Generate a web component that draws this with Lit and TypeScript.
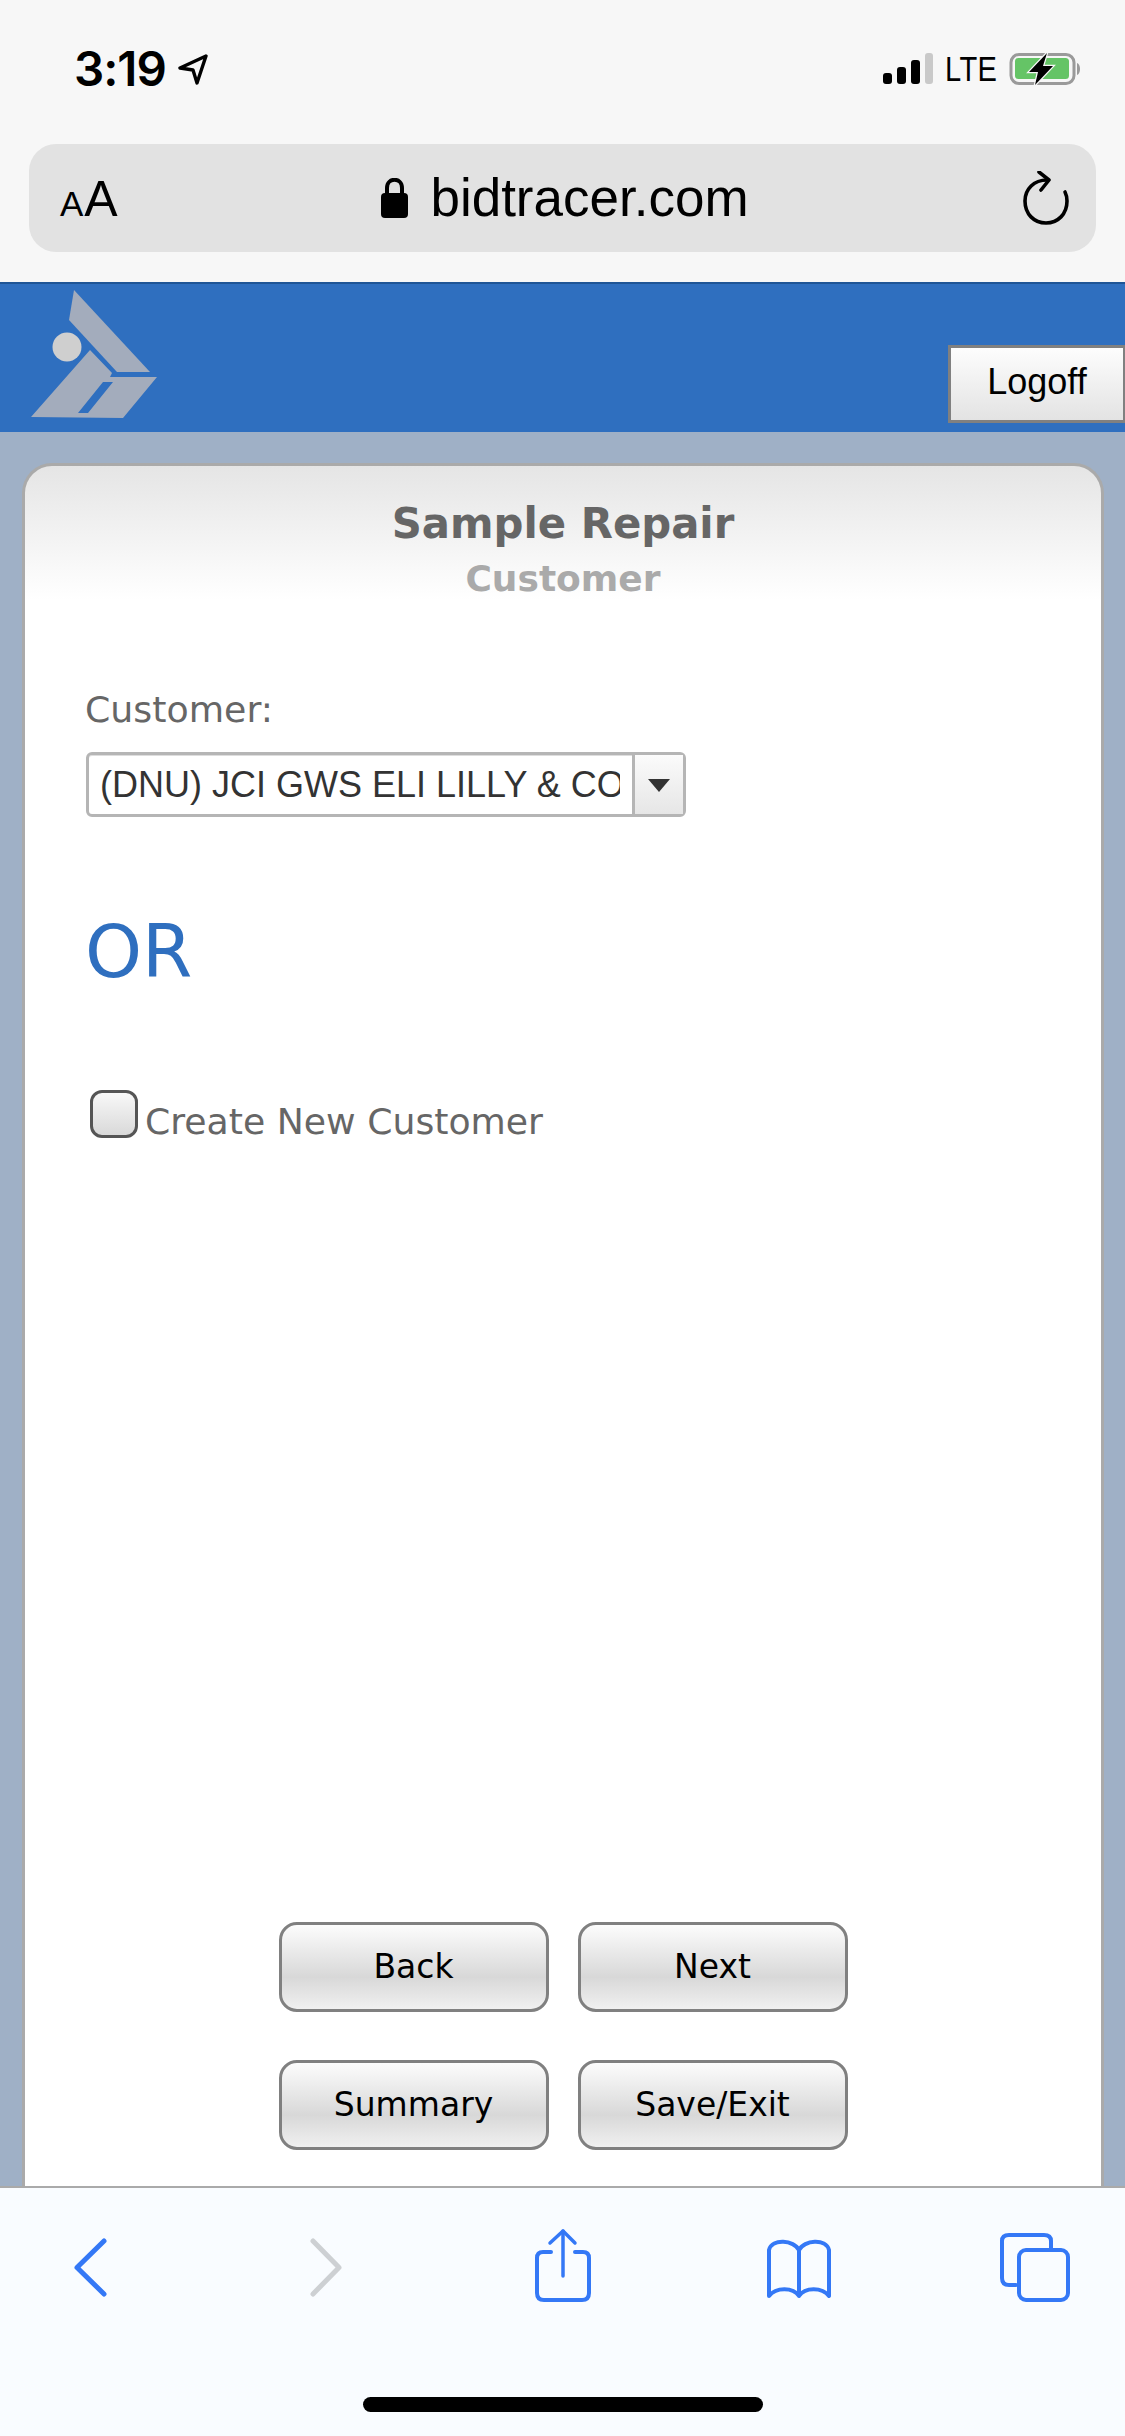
import { LitElement, html, css, svg } from "lit";
import { customElement } from "lit/decorators.js";

@customElement("app-root")
export class AppRoot extends LitElement {
  static styles = css`
    :host { display: block; width: 1125px; height: 2436px; overflow: hidden; background: #9fb0c6; font-family: "DejaVu Sans", sans-serif; }
    * { box-sizing: border-box; }
    .page { display: flex; flex-direction: column; width: 1125px; height: 2436px; }
    .top { height: 282px; background: #f7f7f7; padding: 0 29px; display: flex; flex-direction: column; flex: none; }
    .status { height: 144px; display: flex; align-items: flex-start; justify-content: space-between; padding: 44px 0 0 45px; }
    .time-wrap { display: flex; align-items: center; gap: 11px; }
    .time { font: 600 47.5px/50px Inter, sans-serif; color: #000; letter-spacing: -1px; }
    .status-right { display: flex; align-items: flex-end; margin: 9px 14px 0 0; }
    .lte { font: 500 35px/32px "Liberation Sans", sans-serif; color: #000; margin: 0 13px 0 11px; width: 51px; white-space: nowrap; letter-spacing: .5px; transform: scaleX(.83); transform-origin: left; }
    .url { height: 108px; border-radius: 27px; background: #e2e2e2; display: flex; align-items: center; justify-content: space-between; padding: 0 27px 0 31px; }
    .aa { display: flex; align-items: baseline; color: #000; font-family: "Liberation Sans", sans-serif; width: 58px; margin-top: 2px; }
    .aa .s { font-size: 35px; }
    .aa .b { font-size: 50px; margin-left: 1px; }
    .site { display: flex; align-items: center; gap: 22px; margin-left: -11px; }
    .domain { font: 400 53px/60px "Liberation Sans", sans-serif; color: #000; }
    .header { height: 150px; flex: none; background: #2f6fbf; border-top: 2px solid #1f5596; display: flex; justify-content: space-between; align-items: flex-end; padding-bottom: 9px; position: relative; }
    .logo { position: absolute; left: 0; top: 0; }
    .logoff { width: 177px; height: 78px; border: 3px solid #808080; border-right-width: 2px; background: linear-gradient(#fdfdfd, #e3e3e3); font: 400 36px/68px "Liberation Sans", sans-serif; color: #000; text-align: center; margin-left: auto; }
    .main { flex: 1; min-height: 0; padding: 31px 21px 0 22px; display: flex; }
    .card { flex: 1; border: 3px solid #aaa; border-bottom: none; border-radius: 30px 30px 0 0; background: linear-gradient(#e5e5e5, #fff 134px); display: flex; flex-direction: column; padding: 0 0 36px 61px; }
    .title { font-weight: 700; font-size: 41.8px; line-height: 50px; color: #666; text-align: center; margin: 33px 61px 0 0; }
    .sub { font-weight: 700; font-size: 36px; line-height: 44px; color: #aaa; text-align: center; margin: 8px 61px 0 0; }
    .label { font-size: 36.3px; line-height: 42px; color: #666; margin: 88px 0 0 -1px; }
    .select { margin-top: 21px; width: 600px; height: 65px; border: 3px solid #b5b5b5; border-radius: 6px; background: #fff; display: flex; box-shadow: inset 0 1px 0 #ddd; }
    .select-text { width: 543px; padding-left: 11px; overflow: hidden; white-space: nowrap; }
    .select-inner { display: block; width: 520px; overflow: hidden; font: 400 36px/60px "Liberation Sans", sans-serif; color: #333; }
    .select-btn { flex: 1; border-left: 3px solid #b5b5b5; background: linear-gradient(#fbfbfb, #e6e6e6); display: flex; align-items: center; justify-content: center; }
    .or { font-size: 72.5px; line-height: 84px; color: #2f6fbf; margin: 93px 0 0 -1px; }
    .check-row { display: flex; align-items: flex-end; gap: 7px; margin: 96px 0 0 4px; }
    .check { width: 48px; height: 48px; border: 3px solid #555; border-radius: 12px; background: linear-gradient(#f8f8f8, #d9d9d9); flex: none; }
    .check-label { font-size: 36.2px; line-height: 44px; color: #666; margin-bottom: -6px; }
    .buttons { margin-top: auto; display: grid; grid-template-columns: 270px 270px; gap: 48px 29px; justify-content: center; margin-right: 61px; }
    .btn { height: 90px; border: 3px solid #808080; border-radius: 18px; background: linear-gradient(#fcfcfc, #f4f4f4 14%, #d8d8d8 62%, #f0f0f0); font-size: 33px; line-height: 84px; text-align: center; color: #000; }
    .bar { height: 250px; flex: none; background: #f9fcff; border-top: 2px solid #aaa; display: flex; flex-direction: column; align-items: center; }
    .icons { display: block; flex: none; }
    .home { width: 400px; height: 15px; background: #000; border-radius: 8px; }
  `;

  private blue = "#3478f6";

  render() {
    const b = this.blue;
    return html`<div class="page">
      <div class="top">
        <div class="status">
          <div class="time-wrap">
            <span class="time">3:19</span>
            <svg width="32" height="32" viewBox="0 0 32 32" fill="none"><path d="M29 3 L3 15 L16 17 L20 30 Z" stroke="#000" stroke-width="3.4" stroke-linejoin="round"/></svg>
          </div>
          <div class="status-right">
            <svg width="52" height="32" viewBox="0 0 52 32">
              <rect x="1" y="20" width="9" height="11" rx="3" fill="#000"/>
              <rect x="15" y="14" width="9" height="17" rx="3" fill="#000"/>
              <rect x="29" y="7" width="9" height="24" rx="3" fill="#000"/>
              <rect x="43" y="0" width="8" height="31" rx="3" fill="#c9c9c9"/>
            </svg>
            <span class="lte">LTE</span>
            <svg width="73" height="32" viewBox="0 0 73 32">
              <rect x="2" y="1.5" width="63" height="29" rx="8" fill="none" stroke="#9a9a9a" stroke-width="3"/>
              <rect x="6" y="5" width="54" height="21" rx="3.5" fill="#65c466"/>
              <path d="M68 10 C72 11 72 21 68 22 Z" fill="#9a9a9a"/>
              <path d="M38 0 L20 19 H29 L26 32 L44 13 H34 Z" fill="#000" stroke="#f7f7f7" stroke-width="2.5" paint-order="stroke"/>
            </svg>
          </div>
        </div>
        <div class="url">
          <div class="aa"><span class="s">A</span><span class="b">A</span></div>
          <div class="site">
            <svg width="27" height="40" viewBox="0 0 27 40"><path d="M6 16 V10 C6 -1 21 -1 21 10 V16" fill="none" stroke="#000" stroke-width="4"/><rect x="0" y="15" width="27" height="25" rx="4" fill="#000"/></svg>
            <span class="domain">bidtracer.com</span>
          </div>
          <svg width="46" height="54" viewBox="0 0 46 54" fill="none" stroke="#000" stroke-width="3.6" stroke-linecap="round" stroke-linejoin="round">
            <path d="M24 9 C11 9 2 18 2 30 C2 43 11 52 23 52 C35 52 44 43 44 30 C44 26 43 23 42 21"/>
            <path d="M16 1 L26 9 L18 19"/>
          </svg>
        </div>
      </div>
      <div class="header">
        <svg class="logo" width="170" height="150" viewBox="0 0 170 150">
          <path d="M74 6 L150 88 L117 88 L69 36 Z" fill="#a3acbc"/>
          <path d="M31 133 L90 66 L112 89 L110 93 L157 93 L123 134 Z M78 129 L88 129 L113 98 L103 98 Z" fill="#a3acbc" fill-rule="evenodd"/>
          <circle cx="67" cy="63" r="14.5" fill="#cfcfcf"/>
        </svg>
        <div class="logoff">Logoff</div>
      </div>
      <div class="main">
        <div class="card">
          <div class="title">Sample Repair</div>
          <div class="sub">Customer</div>
          <div class="label">Customer:</div>
          <div class="select">
            <div class="select-text"><span class="select-inner">(DNU) JCI GWS ELI LILLY &amp; CO</span></div>
            <div class="select-btn"><svg width="22" height="14" viewBox="0 0 22 14"><path d="M0 1 H22 L11 14 Z" fill="#333"/></svg></div>
          </div>
          <div class="or">OR</div>
          <div class="check-row"><div class="check"></div><span class="check-label">Create New Customer</span></div>
          <div class="buttons">
            <div class="btn">Back</div><div class="btn">Next</div>
            <div class="btn">Summary</div><div class="btn">Save/Exit</div>
          </div>
        </div>
      </div>
      <div class="bar">
        <svg class="icons" width="1125" height="209" viewBox="0 2188 1125 209" fill="none" stroke-linecap="round" stroke-linejoin="round">
          ${svg`
          <path d="M104 2241 L77 2267.5 L104 2294" stroke=${b} stroke-width="5"/>
          <path d="M313 2241 L339 2267.5 L313 2294" stroke="#cdd0d3" stroke-width="5"/>
          <path d="M575 2252 H583 Q589 2252 589 2258 V2293 Q589 2300 582 2300 H544 Q537 2300 537 2293 V2258 Q537 2252 543 2252 H551" stroke=${b} stroke-width="4"/>
          <path d="M563 2231 V2276" stroke=${b} stroke-width="3.5"/>
          <path d="M550 2243 L563 2231 L575 2243" stroke=${b} stroke-width="3.5"/>
          <path d="M799 2250 C794 2240 772 2238 769 2250 V2296 C776 2287 793 2287 799 2296 C805 2287 822 2287 829 2296 V2250 C826 2238 804 2240 799 2250 Z M799 2250 V2296" stroke=${b} stroke-width="4"/>
          <path d="M1016 2285 H1009 Q1002 2285 1002 2278 V2241 Q1002 2235 1009 2235 H1044 Q1051 2235 1051 2241 V2249" stroke=${b} stroke-width="4"/>
          <rect x="1019" y="2250" width="49" height="50" rx="7" stroke=${b} stroke-width="4"/>
          `}
        </svg>
        <div class="home"></div>
      </div>
    </div>`;
  }
}
